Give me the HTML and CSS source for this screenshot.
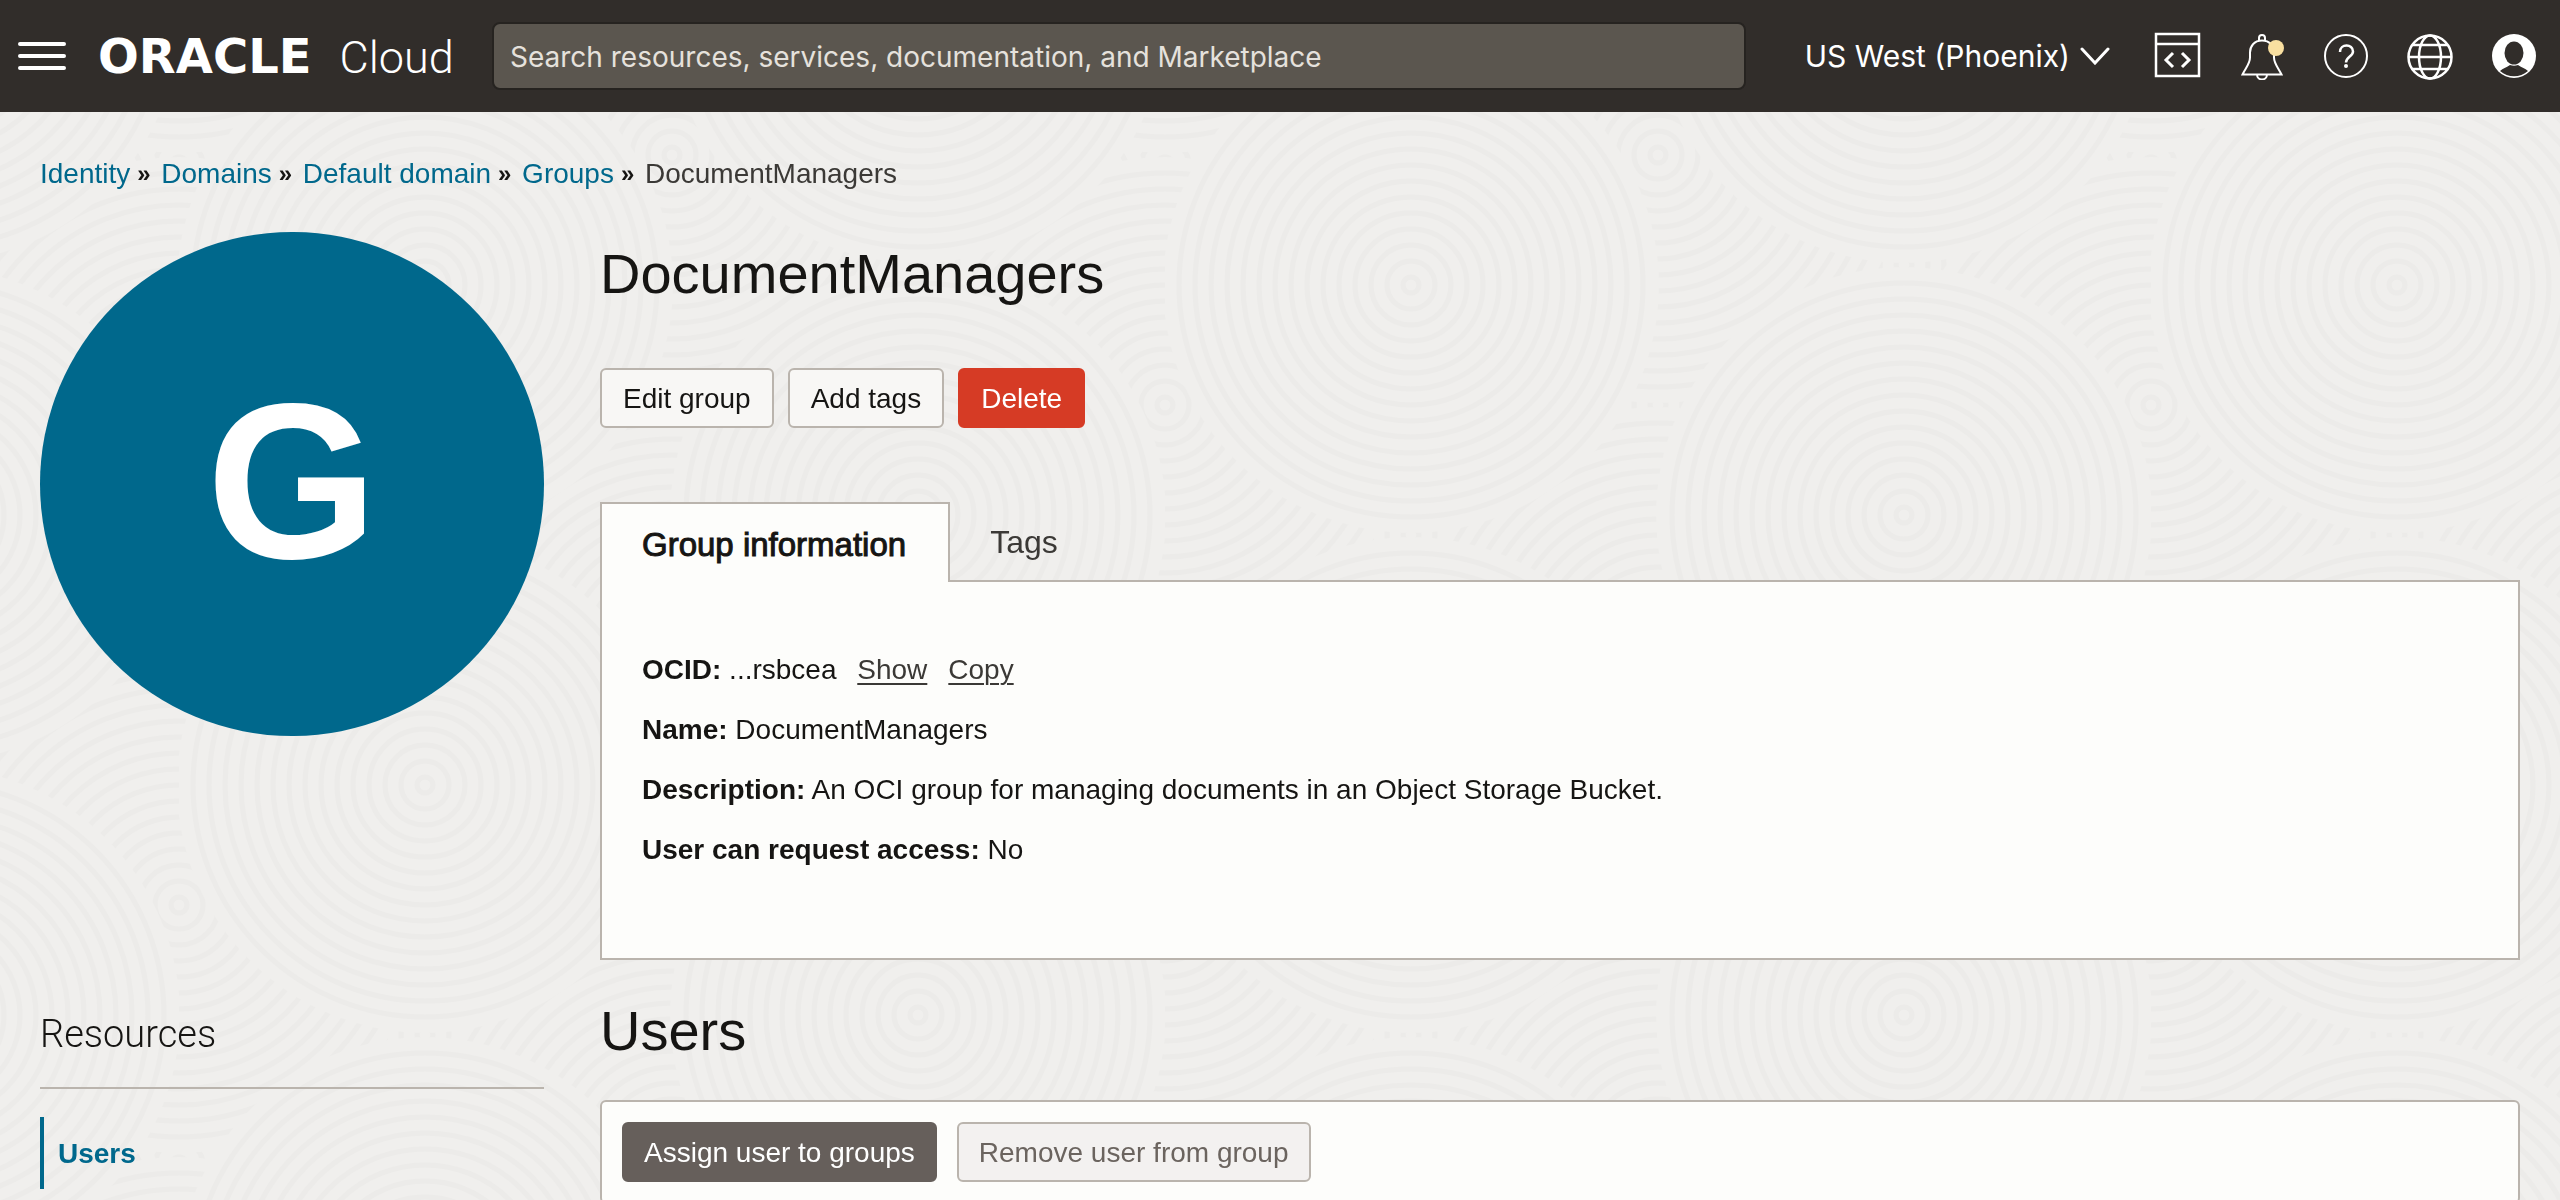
FILE: index.html
```html
<!DOCTYPE html>
<html lang="en">
<head>
<meta charset="utf-8">
<title>DocumentManagers - Oracle Cloud</title>
<link rel="stylesheet" href="styles.css">
</head>
<body>
<svg class="backdrop" aria-hidden="true">
  <defs>
    <g id="rings">
      <circle r="248" class="disc"/>
      <circle r="8"/><circle r="24"/><circle r="40"/><circle r="56"/><circle r="72"/><circle r="88"/><circle r="104"/><circle r="120"/>
      <circle r="136"/><circle r="152"/><circle r="168"/><circle r="184"/><circle r="200"/><circle r="216"/><circle r="232"/>
    </g>
    <pattern id="weave" x="179" y="155" width="986" height="500" patternUnits="userSpaceOnUse">
      <use href="#rings" x="493" y="250"/>
      <use href="#rings" x="0" y="10"/><use href="#rings" x="986" y="10"/><use href="#rings" x="0" y="510"/><use href="#rings" x="986" y="510"/>
      <use href="#rings" x="246" y="380"/><use href="#rings" x="246" y="-120"/>
      <use href="#rings" x="739" y="110"/><use href="#rings" x="739" y="610"/>
      <use href="#rings" x="0" y="250"/><use href="#rings" x="986" y="250"/>
      <use href="#rings" x="493" y="0"/><use href="#rings" x="493" y="500"/>
      <use href="#rings" x="739" y="360"/><use href="#rings" x="739" y="-140"/>
      <use href="#rings" x="246" y="130"/><use href="#rings" x="246" y="630"/>
    </pattern>
  </defs>
  <rect width="100%" height="100%" fill="url(#weave)"/>
</svg>
<header class="topbar">
  <button class="icon-button menu" aria-label="Navigation menu">
    <svg width="48" height="28" viewBox="0 0 48 28" fill="none" stroke="#fff" stroke-width="4" stroke-linecap="round"><path d="M2 2h44M2 14h44M2 26h44"/></svg>
  </button>
  <a class="brand" href="#"><span class="brand-name">ORACLE</span><span class="brand-product">Cloud</span></a>
  <input class="search" type="search" aria-label="Search" placeholder="Search resources, services, documentation, and Marketplace">
  <div class="tools">
    <button class="region">US West (Phoenix)
      <svg width="30" height="18" viewBox="0 0 30 18" fill="none" stroke="#fff" stroke-width="3" stroke-linecap="round"><path d="M2 2l13 14L28 2"/></svg>
    </button>
    <button class="icon-button" aria-label="Developer tools">
      <svg width="48" height="48" viewBox="0 0 48 48" fill="none" stroke="#fff" stroke-width="2.5"><path d="M2 2h43v42H2zM2 12h43"/><path d="M19 21l-7 7 7 7M28 21l7 7-7 7" stroke-width="3"/></svg>
    </button>
    <button class="icon-button" aria-label="Announcements">
      <svg width="48" height="48" viewBox="0 0 48 48" fill="none" stroke="#fff" stroke-width="2"><path d="M21 9V6a3 3 0 0 1 6 0v3M24 8.500c-8 0-12 6-12 12v5c0 6-4 10-7.500 17h39c-3.500-7-7.500-11-7.500-17v-5c0-6-4-12-12-12zM19 42.500a5 5 0 0 0 10 0"/><circle cx="38" cy="16" r="8" fill="#f9dfa0" stroke="none"/></svg>
    </button>
    <button class="icon-button" aria-label="Help">
      <svg width="48" height="48" viewBox="0 0 48 48" fill="none" stroke="#fff" stroke-width="2"><circle cx="24" cy="24" r="21"/><path d="M18 20c0-8.500 13-8.500 13-.5 0 5-7 5-7 11" stroke-width="2.500"/><circle cx="24" cy="34" r="2" fill="#fff" stroke="none"/></svg>
    </button>
    <button class="icon-button" aria-label="Language">
      <svg width="48" height="48" viewBox="0 0 48 48" fill="none" stroke="#fff" stroke-width="2.500"><circle cx="24" cy="25" r="21.500"/><ellipse cx="24" cy="25" rx="11" ry="21.500"/><path d="M2 25h44M6 13h36M6 37h36"/></svg>
    </button>
    <button class="icon-button" aria-label="Profile">
      <svg width="48" height="48" viewBox="0 0 48 48"><circle cx="24" cy="24" r="22" fill="#fff"/><ellipse cx="24" cy="21" rx="9.500" ry="11.500" fill="#312d2a"/><path d="M10 39c3-3 6-3 10-6q4 1.500 8 0c4 3 7 3 10 6-8 7-20 7-28 0z" fill="#312d2a"/></svg>
    </button>
  </div>
</header>
<div class="page">
  <nav class="crumbs" aria-label="Breadcrumb">
    <a href="#">Identity</a><span class="sep">»</span><a href="#">Domains</a><span class="sep">»</span><a href="#">Default domain</a><span class="sep">»</span><a href="#">Groups</a><span class="sep">»</span><span>DocumentManagers</span>
  </nav>
  <div class="columns">
    <aside class="side">
      <div class="avatar">G</div>
      <h2 class="side-title">Resources</h2>
      <nav><a class="side-link" href="#">Users</a></nav>
    </aside>
    <main class="main">
      <h1 class="title">DocumentManagers</h1>
      <div class="actions">
        <button class="btn">Edit group</button>
        <button class="btn">Add tags</button>
        <button class="btn btn-danger">Delete</button>
      </div>
      <div class="tabs" role="tablist">
        <button class="tab tab-active" role="tab" aria-selected="true">Group information</button>
        <button class="tab" role="tab" aria-selected="false">Tags</button>
      </div>
      <section class="panel">
        <p class="fact"><b>OCID:</b> ...rsbcea <a class="fact-link" href="#">Show</a><a class="fact-link" href="#">Copy</a></p>
        <p class="fact"><b>Name:</b> DocumentManagers</p>
        <p class="fact"><b>Description:</b> An OCI group for managing documents in an Object Storage Bucket.</p>
        <p class="fact"><b>User can request access:</b> No</p>
      </section>
      <h2 class="title title-users">Users</h2>
      <section class="card">
        <button class="btn btn-primary">Assign user to groups</button>
        <button class="btn" disabled>Remove user from group</button>
      </section>
    </main>
  </div>
</div>
</body>
</html>
```
FILE: styles.css
```css
* { box-sizing: border-box; }
html { height: 100%; overflow: hidden; background: #f0efed; }
body {
  margin: 0;
  min-height: 100%;
  font: 28px/40px "Liberation Sans", Arial, sans-serif;
  color: #161513;
}
button { font: inherit; color: inherit; margin: 0; cursor: pointer; }
a { color: #00688c; text-decoration: none; }
h1, h2, p { margin: 0; }

/* Woven ring texture behind the whole page */
.backdrop { position: fixed; inset: 0; z-index: -1; width: 100%; height: 100%; }
.backdrop circle { fill: none; stroke: #ecebe9; stroke-width: 5; }
.backdrop .disc { fill: #f0efed; stroke: none; }

.topbar {
  display: flex;
  align-items: center;
  height: 112px;
  padding: 0 22px 0 18px;
  background: #312d2a;
  color: #fff;
}
.icon-button { display: flex; padding: 0; border: 0; background: none; }
.brand { display: flex; align-items: baseline; gap: 28px; width: 360px; margin-left: 32px; padding-top: 2px; color: #fff; }
.brand-name { font: bold 48px/56px "DejaVu Sans", sans-serif; }
.brand-product { font: 300 45px/56px Roboto, sans-serif; }
.search {
  flex: 0 1 1254px;
  height: 68px;
  margin-left: 34px;
  padding: 2px 16px 0;
  border: 2px solid #262320;
  border-radius: 8px;
  background: #5b564f;
  color: #fff;
  font: 28px Inter, sans-serif;
}
.search::placeholder { color: #e5e1dc; opacity: 1; }
.tools { display: flex; align-items: center; gap: 36px; margin-left: auto; font: 30px/40px Inter, sans-serif; }
.region { display: flex; align-items: center; gap: 10px; padding: 0; margin-right: 8px; border: 0; background: none; white-space: nowrap; }

.page { padding: 40px 40px 0; }
.crumbs { display: flex; height: 80px; line-height: 44px; color: #3b3936; }
.sep { width: 31px; padding-left: 7px; color: #161513; font-weight: bold; font-size: 24px; }
.columns { display: flex; gap: 56px; }
.side { flex: 0 0 504px; }
.avatar {
  display: grid;
  place-items: center;
  height: 504px;
  padding-bottom: 4px;
  border-radius: 50%;
  background: #00688c;
  color: #fff;
  font: bold 220px/1 "Liberation Sans", sans-serif;
}
.side-title {
  height: 89px;
  margin: 264px 0 28px;
  border-bottom: 2px solid #bab4ad;
  font: 300 38px/68px Roboto, sans-serif;
}
.side-link { display: block; padding: 2px 0 0 14px; border-left: 4px solid #00688c; font-weight: bold; line-height: 70px; }

.main { flex: 1; min-width: 0; }
.title { font-weight: normal; font-size: 56px; line-height: 84px; }
.actions { display: flex; gap: 14px; margin: 52px 0 74px; }
.btn { height: 60px; padding: 2px 20px 0; border: 2px solid #bab4ad; border-radius: 6px; background: #f8f7f5; white-space: nowrap; }
.actions .btn { padding: 2px 21px 0; }
.btn-danger { border-color: #d63b25; background: #d63b25; color: #fff; }
.btn-primary { border-color: #665f5b; background: #665f5b; color: #fff; }
.btn:disabled { background: #f3f1f0; color: #6b645f; }
.tabs { display: flex; margin-bottom: -2px; }
.tab { height: 80px; padding: 0 40px; border: 0; background: none; font-size: 32px; color: #3b3936; }
/* The open tab sits over the panel's top border */
.tab-active { position: relative; padding: 4px 42px 0 40px; border: 2px solid #bab4ad; border-bottom: 0; background: #fdfdfb; color: #161513; font-size: 33px; -webkit-text-stroke: 1px #161513; }
.panel { padding: 58px 40px 78px; border: 2px solid #bab4ad; background: #fdfdfb; }
.fact { line-height: 60px; }
.fact-link { margin-left: 13px; margin-right: 8px; color: #3b3936; text-decoration: underline; text-decoration-thickness: 2px; text-underline-offset: 4px; }
.title-users { margin: 29px 0 27px; }
.card { display: flex; gap: 20px; padding: 20px; border: 2px solid #bab4ad; border-radius: 6px; background: #fdfdfb; }
```
